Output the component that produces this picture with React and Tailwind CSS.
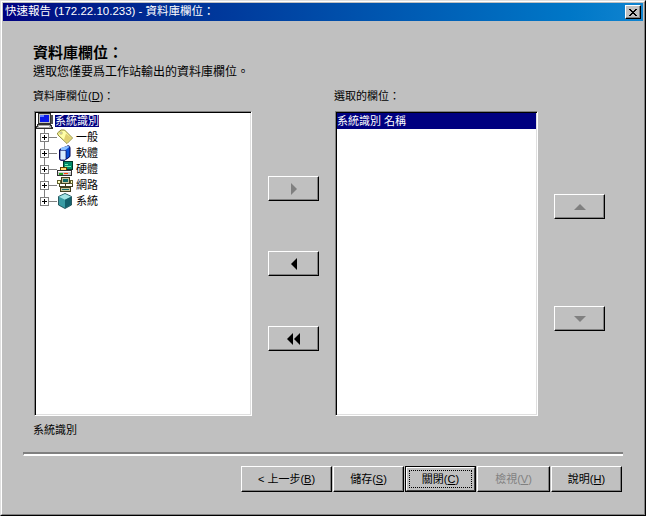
const sans = "font-['Liberation_Sans','Noto_Sans_CJK_TC',sans-serif]";

function Connector({ last }) {
  return (
    <svg width="20" height="16" viewBox="0 0 20 16" className="shrink-0" shapeRendering="crispEdges">
      <path d={last ? "M7.5 0V8" : "M7.5 0V16"} stroke="#808080" fill="none" />
      <path d="M12 8.5H20" stroke="#808080" fill="none" />
      <rect x="3.5" y="4.5" width="8" height="8" fill="#fff" stroke="#808080" />
      <path d="M5 8.5H10M7.5 6V11" stroke="#000" fill="none" />
    </svg>
  );
}

const TagIcon = () => (
  <svg width="16" height="16" viewBox="0 0 16 16" className="shrink-0">
    <path d="M0.5 4 L4 1 H7.5 L15.5 9 L10 14.5 L1 6Z" fill="#ffffa8" stroke="#807820" strokeWidth="0.9" />
    <path d="M9 4.5 L14.6 9 L10 13.6 L7 10.5Z" fill="#e0d070" />
    <rect x="3" y="3" width="2" height="2" fill="#fff" stroke="#807820" strokeWidth="0.5" />
  </svg>
);
const BookIcon = () => (
  <svg width="16" height="16" viewBox="0 0 16 16" className="shrink-0">
    <path d="M2.5 5 Q3 3.5 6 3 L11 0.8 Q13 0.6 13 3 V11 Q13 12 11 13 L7.5 15.2 H4 Q2.5 15.2 2.5 13.5Z" fill="#0a50d8" stroke="#000050" />
    <path d="M3 5.2 H8 Q9 5.2 9 6.5 V13.5 Q9 15 7.5 15 H4.5 Q3 15 3 13.5Z" fill="#d8ecff" stroke="#000050" strokeWidth="0.7" />
    <path d="M4 2.8 L10 0.9 L12.8 1.6 L8.5 5H4Z" fill="#8cc0ff" />
  </svg>
);
const HardwareIcon = () => (
  <svg width="16" height="16" viewBox="0 0 16 16" className="shrink-0" shapeRendering="crispEdges">
    <rect x="6.5" y="0.5" width="9" height="8" fill="#008868" stroke="#003828" />
    <path d="M8 3H11M8 5H14" stroke="#70f0b0" />
    <path d="M3.5 6.5 H9.5 V9.5 H3.5Z" fill="#ffd870" stroke="#604000" />
    <path d="M0.5 9.5 H14.5 V14.5 H0.5Z" fill="#c8c8c8" stroke="#303030" />
    <rect x="1" y="10" width="13" height="1" fill="#ffffff" />
    <rect x="2" y="12" width="4" height="2" fill="#20a020" />
    <rect x="7" y="12" width="4" height="1" fill="#ff4000" />
  </svg>
);
const NetworkIcon = () => (
  <svg width="16" height="16" viewBox="0 0 16 16" className="shrink-0" shapeRendering="crispEdges">
    <rect x="4.5" y="0.5" width="8" height="6" fill="#c8c8a0" stroke="#404020" />
    <rect x="6" y="2" width="5" height="3" fill="#106868" />
    <rect x="0.5" y="3.5" width="3" height="3" fill="#ffffc0" stroke="#606030" />
    <rect x="13.5" y="3.5" width="2" height="3" fill="#ffffc0" stroke="#606030" />
    <path d="M8.5 7V11M2 7V9.5H15V7" stroke="#404020" fill="none" />
    <rect x="3.5" y="10.5" width="10" height="4" fill="#c8c8a0" stroke="#404020" />
    <rect x="5" y="12" width="7" height="1" fill="#106868" />
  </svg>
);
const CubeIcon = () => (
  <svg width="16" height="16" viewBox="0 0 16 16" className="shrink-0">
    <path d="M8 0.5 L14.5 3.5 V12 L8 15.5 L1.5 12 V3.5Z" fill="#3a9ca4" stroke="#0c3c44" strokeWidth="0.8" />
    <path d="M8 1 L14 3.8 L8 6.8 L2 3.8Z" fill="#a4e4e4" />
    <path d="M8 6.8 L14 3.8 V11.8 L8 15Z" fill="#14606c" />
  </svg>
);
const ComputerIcon = () => (
  <svg width="17" height="16" viewBox="0 0 17 16" className="shrink-0 -ml-[1px]" shapeRendering="crispEdges">
    <path d="M2.5 0.5 H14.5 V10.5 H2.5Z" fill="#c0c0c0" stroke="#303030" />
    <rect x="4" y="2" width="9" height="7" fill="#0818e8" />
    <rect x="4" y="2" width="4" height="2" fill="#6080ff" />
    <rect x="15" y="2" width="2" height="9" fill="#505050" />
    <path d="M1.5 11.5 H14.5 L16.5 15.5 H0.5Z" fill="#a8a8a8" stroke="#303030" />
    <path d="M3 13H13" stroke="#ffffff" />
  </svg>
);

const raised =
  "border border-t-white border-l-white border-r-black border-b-black shadow-[inset_-1px_-1px_0_#808080]";
const sunken =
  "border border-t-[#808080] border-l-[#808080] border-r-white border-b-white shadow-[inset_1px_1px_0_#000,inset_-1px_-1px_0_#dfdfdf]";

function Arrow({ dir, color }) {
  const d = {
    right: "M0 0 L5 5 L0 10Z",
    left: "M5 0 L0 5 L5 10Z",
    up: "M5 0 L10 5 H0Z",
    down: "M0 0 H10 L5 5Z",
  }[dir];
  const vertical = dir === "up" || dir === "down";
  return (
    <svg width={vertical ? 12 : 6} height={vertical ? 6 : 12} viewBox={vertical ? "0 0 10 5" : "0 0 5 10"}>
      <path d={d} fill={color} />
    </svg>
  );
}

function ArrowBtn({ children }) {
  return (
    <div className={`w-[51px] h-[25px] flex items-center justify-center gap-[1px] bg-[#c0c0c0] ${raised}`}>
      {children}
    </div>
  );
}

function Key({ k }) {
  return <span className="underline">{k}</span>;
}

function FootBtn({ width, children, disabled }) {
  return (
    <div
      className={`h-[26px] flex items-center justify-center text-[11px] ${raised} ${disabled ? "text-[#808080]" : "text-black"}`}
      style={{ width }}
    >
      <span>{children}</span>
    </div>
  );
}

const nodes = [
  ["一般", TagIcon],
  ["軟體", BookIcon],
  ["硬體", HardwareIcon],
  ["網路", NetworkIcon],
  ["系統", CubeIcon],
];

export default function App() {
  return (
    <div className={`w-[646px] h-[516px] overflow-hidden bg-[#c0c0c0] text-black text-[11px] leading-none ${sans} border border-t-[#dfdfdf] border-l-[#dfdfdf] border-r-black border-b-black`}>
      <div className="h-full flex flex-col border border-t-white border-l-white border-r-[#808080] border-b-[#808080] p-[1px]">
        <div className="h-[18px] shrink-0 flex items-center justify-between bg-gradient-to-r from-[#000080] to-[#1084d0] pl-[2px] pr-[2px]">
          <span className="text-white text-[11.5px]">快速報告 (172.22.10.233) - 資料庫欄位：</span>
          <div className={`w-[16px] h-[14px] flex items-center justify-center bg-[#c0c0c0] ${raised}`}>
            <svg width="8" height="7" viewBox="0 0 8 7" shapeRendering="crispEdges">
              <path d="M0 0h2v1h1v1h2V1h1V0h2v1H7v1H6v1H5v1h1v1h1v1h1v1H6V6H5V5H3v1H2v1H0V6h1V5h1V4h1V3H2V2H1V1H0Z" fill="#000" />
            </svg>
          </div>
        </div>

        <div className="pl-[30px] pt-[23px] text-[15px] font-bold leading-[18px]">資料庫欄位：</div>
        <div className="pl-[30px] pt-[3px] text-[12px] leading-[14px]">選取您僅要爲工作站輸出的資料庫欄位。</div>

        <div className="flex pl-[30px] pt-[2px] h-[32px] items-center text-[11px]">
          <span className="w-[301px]">資料庫欄位(<Key k="D" />)：</span>
          <span>選取的欄位：</span>
        </div>

        <div className="flex pl-[31px] gap-[16px]">
          <div className={`w-[218px] h-[305px] bg-white pt-[1px] pl-[2px] ${sunken}`}>
            <div className="h-[16px] flex items-center">
              <ComputerIcon />
              <span className="ml-[2px] w-[44px] h-[12px] bg-[#000080] text-white leading-[12px] whitespace-nowrap">系統識別</span>
            </div>
            {nodes.map(([label, Icon], i) => (
              <div key={label} className="h-[16px] flex items-center">
                <Connector last={i === nodes.length - 1} />
                <Icon />
                <span className="ml-[3px]">{label}</span>
              </div>
            ))}
          </div>

          <div className="w-[51px] flex flex-col pt-[65px] gap-[50px]">
            <ArrowBtn><Arrow dir="right" color="#808080" /></ArrowBtn>
            <ArrowBtn><Arrow dir="left" color="#000" /></ArrowBtn>
            <ArrowBtn>
              <Arrow dir="left" color="#000" />
              <Arrow dir="left" color="#000" />
            </ArrowBtn>
          </div>

          <div className={`w-[203px] h-[305px] bg-white p-[1px] ${sunken}`}>
            <div className="h-[16px] flex items-center bg-[#000080] text-white">系統識別 名稱</div>
          </div>

          <div className="w-[51px] flex flex-col pt-[83px] gap-[87px]">
            <ArrowBtn><Arrow dir="up" color="#808080" /></ArrowBtn>
            <ArrowBtn><Arrow dir="down" color="#808080" /></ArrowBtn>
          </div>
        </div>

        <div className="pl-[30px] pt-[8px] leading-[13px]">系統識別</div>

        <div className="ml-[20px] w-[600px] mt-[15px] h-[4px] border-t-2 border-l border-t-[#808080] border-l-[#808080] border-b-2 border-b-white" />

        <div className="flex pl-[238px] pt-[10px] gap-[1px]">
          <FootBtn width={91}>&lt; 上一步(<Key k="B" />)</FootBtn>
          <FootBtn width={71}>儲存(<Key k="S" />)</FootBtn>
          <div className="w-[71px] h-[26px] border border-black">
            <div className="h-full flex items-center justify-center border border-t-white border-l-white border-r-[#404040] border-b-[#404040] p-[2px]">
              <div className="w-full h-full flex items-center justify-center border border-dotted border-black">
                關閉(<Key k="C" />)
              </div>
            </div>
          </div>
          <FootBtn width={73} disabled>檢視(<Key k="V" />)</FootBtn>
          <FootBtn width={71}>說明(<Key k="H" />)</FootBtn>
        </div>
      </div>
    </div>
  );
}
